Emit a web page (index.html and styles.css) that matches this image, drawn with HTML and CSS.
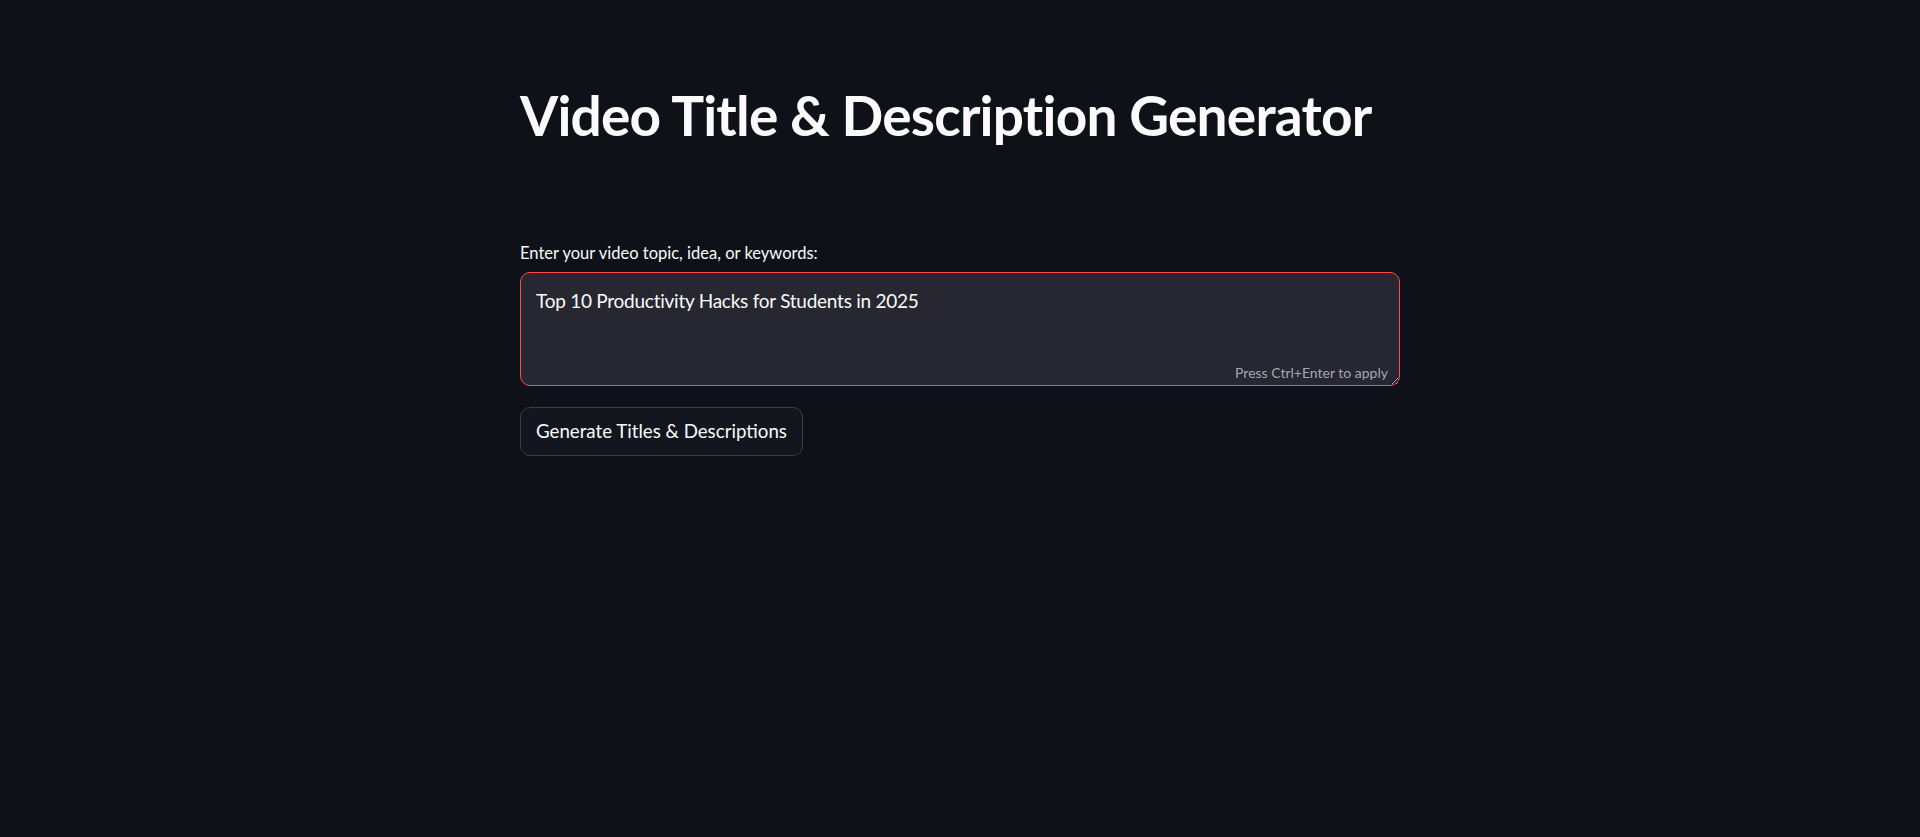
FILE: index.html
```html
<!DOCTYPE html>
<html lang="en">
<head>
<meta charset="utf-8">
<title>Video Title & Description Generator</title>
<link rel="stylesheet" href="styles.css">
</head>
<body>
<main class="app">
  <div class="block">
    <h1 class="title">Video Title &amp; Description Generator</h1>
    <div class="field">
      <label class="label" for="topic">Enter your video topic, idea, or keywords:</label>
      <div class="input-wrap">
        <textarea id="topic" class="textarea">Top 10 Productivity Hacks for Students in 2025</textarea>
        <span class="hint">Press Ctrl+Enter to apply</span>
      </div>
    </div>
    <div class="actions">
      <button class="btn" type="button">Generate Titles &amp; Descriptions</button>
    </div>
  </div>
</main>
</body>
</html>
```

FILE: styles.css
```css
html, body {
  margin: 0;
  padding: 0;
  background: #0e1117;
  color: #fafafa;
  font-family: "Lato", "Noto Sans", sans-serif;
}
.app {
  display: flex;
  justify-content: center;
  min-height: 837px;
}
.block {
  width: 880px;
  padding-top: 80px;
  display: flex;
  flex-direction: column;
}
.title {
  margin: 0;
  font-size: 55px;
  font-weight: 700;
  line-height: 70px;
  letter-spacing: -0.8px;
  color: #fafafa;
}
.field {
  margin-top: 92px;
  display: flex;
  flex-direction: column;
}
.label {
  font-size: 16.5px;
  line-height: 22px;
  margin-bottom: 8px;
  color: #fafafa;
}
.input-wrap {
  position: relative;
  height: 114px;
}
.textarea {
  box-sizing: border-box;
  width: 100%;
  height: 114px;
  margin: 0;
  padding: 14px 15px;
  background: #262730;
  color: #fafafa;
  border: 1px solid #ff4b4b;
  border-radius: 10px;
  outline: none;
  font-family: inherit;
  font-size: 19px;
  letter-spacing: -0.25px;
  line-height: 28px;
  resize: vertical;
}
.hint {
  position: absolute;
  right: 12px;
  bottom: 3px;
  font-size: 14px;
  line-height: 20px;
  color: #a3a8b4;
}
.actions {
  margin-top: 21px;
  display: flex;
}
.btn {
  height: 49px;
  padding: 0 15px 2px;
  background: #13161e;
  color: #fafafa;
  border: 1px solid #3b3d45;
  border-radius: 10px;
  font-family: inherit;
  font-size: 18.7px;
}
```
